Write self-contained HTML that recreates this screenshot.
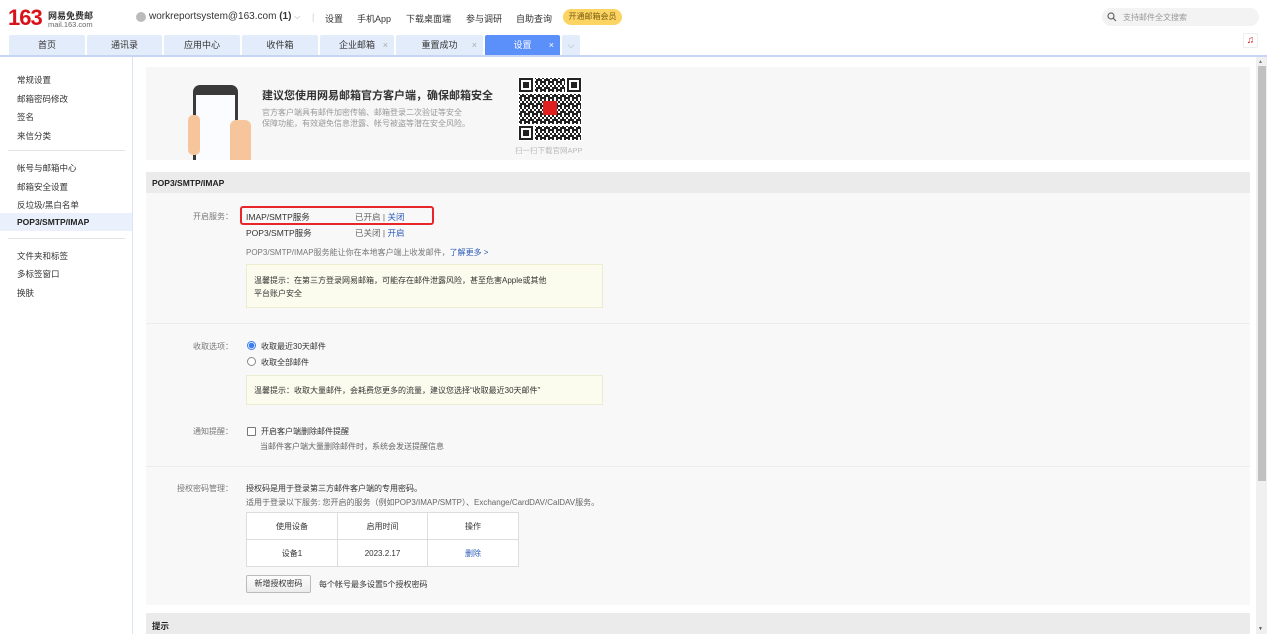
<!DOCTYPE html>
<html><head><meta charset="utf-8">
<style>
*{margin:0;padding:0;box-sizing:border-box}
body{width:1267px;height:634px;overflow:hidden;background:#fff;font-family:"Liberation Sans","Noto Sans CJK SC",sans-serif;font-size:9px;color:#333;position:relative}
.a{position:absolute;white-space:nowrap}
.tab{position:absolute;top:35px;height:20px;background:#e3ecfa;color:#333;font-size:9px;text-align:center;line-height:20px;border-radius:2px 2px 0 0}
.tab .x{position:absolute;right:6px;top:0;color:#aaa;font-size:9px}
.side{position:absolute;left:17px;font-size:8.5px;color:#333}
.lbl{position:absolute;color:#777;font-size:8px}
.blue{color:#2a5bb8}
.tip{position:absolute;left:246px;width:357px;background:#fcfcee;border:1px solid #ececd0;font-size:8px;color:#333}
</style></head><body>
<!-- header -->
<div class="a" style="left:8px;top:5px;font-size:22px;font-weight:bold;color:#d8121a;font-family:'Liberation Sans',sans-serif;letter-spacing:-1px">163</div>
<div class="a" style="left:48px;top:9px;font-size:9px;font-weight:bold;color:#333">网易免费邮</div>
<div class="a" style="left:48px;top:20px;font-size:7.5px;color:#666">mail.163.com</div>
<div class="a" style="left:136px;top:12px;width:10px;height:10px;border-radius:50%;background:#bbb"></div>
<div class="a" style="left:149px;top:11px;font-size:10px;color:#333">workreportsystem@163.com <b>(1)</b> <span style="color:#999;font-size:8px">⌵</span></div>
<div class="a" style="left:312px;top:12px;color:#ccc">|</div>
<div class="a" style="left:325px;top:12px;font-size:9px">设置</div>
<div class="a" style="left:357px;top:12px;font-size:9px">手机App</div>
<div class="a" style="left:406px;top:12px;font-size:9px">下载桌面端</div>
<div class="a" style="left:466px;top:12px;font-size:9px">参与调研</div>
<div class="a" style="left:516px;top:12px;font-size:9px">自助查询</div>
<div class="a" style="left:563px;top:9px;width:59px;height:16px;border-radius:8px;background:#fbd461;font-size:8px;color:#7a5a10;text-align:center;line-height:16px">开通邮箱会员</div>
<div class="a" style="left:1102px;top:8px;width:157px;height:18px;border-radius:9px;background:#f3f3f3"></div>
<svg class="a" style="left:1107px;top:12px" width="10" height="10"><circle cx="4" cy="4" r="3" fill="none" stroke="#666" stroke-width="1.2"/><line x1="6.3" y1="6.3" x2="9" y2="9" stroke="#666" stroke-width="1.2"/></svg>
<div class="a" style="left:1123px;top:12px;font-size:8px;color:#999">支持邮件全文搜索</div>
<div class="a" style="left:1243px;top:33px;width:15px;height:15px;border:1px solid #eee;border-radius:2px;background:#fff;color:#d8121a;font-size:10px;text-align:center;line-height:13px;font-weight:bold">♫</div>
<!-- tabs -->
<div class="tab" style="left:9px;width:76px">首页</div>
<div class="tab" style="left:87px;width:75px">通讯录</div>
<div class="tab" style="left:164px;width:76px">应用中心</div>
<div class="tab" style="left:242px;width:76px">收件箱</div>
<div class="tab" style="left:320px;width:74px">企业邮箱<span class="x">×</span></div>
<div class="tab" style="left:396px;width:87px">重置成功<span class="x">×</span></div>
<div class="tab" style="left:485px;width:75px;background:#5b8ff9;color:#fff">设置<span class="x" style="color:#fff">×</span></div>
<div class="tab" style="left:562px;width:18px;color:#aaa">⌵</div>
<div class="a" style="left:0;top:55px;width:1267px;height:2px;background:#c5d5f3"></div>
<!-- sidebar -->
<div class="a" style="left:132px;top:57px;width:1px;height:577px;background:#dbe4f4"></div>
<div class="side" style="top:74px">常规设置</div>
<div class="side" style="top:93px">邮箱密码修改</div>
<div class="side" style="top:111px">签名</div>
<div class="side" style="top:130px">来信分类</div>
<div class="a" style="left:8px;top:150px;width:117px;height:1px;background:#e3e3e3"></div>
<div class="side" style="top:162px">帐号与邮箱中心</div>
<div class="side" style="top:181px">邮箱安全设置</div>
<div class="side" style="top:199px">反垃圾/黑白名单</div>
<div class="a" style="left:0;top:213px;width:132px;height:18px;background:#eaf1fc"></div>
<div class="side" style="top:217px;font-weight:bold;color:#222">POP3/SMTP/IMAP</div>
<div class="a" style="left:8px;top:238px;width:117px;height:1px;background:#e3e3e3"></div>
<div class="side" style="top:250px">文件夹和标签</div>
<div class="side" style="top:268px">多标签窗口</div>
<div class="side" style="top:287px">换肤</div>
<!-- banner -->
<div class="a" style="left:146px;top:67px;width:1104px;height:93px;background:#f7f7f7"></div>
<div class="a" style="left:193px;top:85px;width:45px;height:75px;background:#3a3a3a;border-radius:7px 7px 0 0"></div>
<div class="a" style="left:196px;top:95px;width:39px;height:65px;background:#fafcff"></div>
<div class="a" style="left:188px;top:115px;width:12px;height:40px;background:#f6c59c;border-radius:5px"></div>
<div class="a" style="left:230px;top:120px;width:21px;height:40px;background:#f6c59c;border-radius:6px 6px 0 0"></div>
<div class="a" style="left:262px;top:87px;font-size:11px;font-weight:bold;color:#333">建议您使用网易邮箱官方客户端，确保邮箱安全</div>
<div class="a" style="left:262px;top:107px;font-size:8px;color:#999;line-height:11px">官方客户端具有邮件加密传输、邮箱登录二次验证等安全<br>保障功能，有效避免信息泄露、帐号被盗等潜在安全风险。</div>
<svg class="a" style="left:518px;top:77px" width="64" height="64">
<defs><pattern id="n" width="8" height="8" patternUnits="userSpaceOnUse">
<rect x="0" y="0" width="2" height="2" fill="#222"/><rect x="4" y="0" width="2" height="4" fill="#222"/><rect x="2" y="2" width="2" height="2" fill="#222"/><rect x="6" y="2" width="2" height="2" fill="#222"/><rect x="0" y="4" width="4" height="2" fill="#222"/><rect x="6" y="4" width="2" height="4" fill="#222"/><rect x="2" y="6" width="2" height="2" fill="#222"/></pattern></defs>
<rect width="64" height="64" fill="#fff"/>
<rect x="17" y="1" width="30" height="14" fill="url(#n)"/><rect x="1" y="17" width="62" height="30" fill="url(#n)"/><rect x="17" y="49" width="46" height="14" fill="url(#n)"/>
<g fill="#222"><rect x="1" y="1" width="14" height="14"/><rect x="49" y="1" width="14" height="14"/><rect x="1" y="49" width="14" height="14"/></g>
<g fill="#fff"><rect x="3" y="3" width="10" height="10"/><rect x="51" y="3" width="10" height="10"/><rect x="3" y="51" width="10" height="10"/></g>
<g fill="#222"><rect x="5" y="5" width="6" height="6"/><rect x="53" y="5" width="6" height="6"/><rect x="5" y="53" width="6" height="6"/></g>
<rect x="25" y="24" width="14" height="14" fill="#e02020"/>
</svg>
<div class="a" style="left:515px;top:145px;font-size:7.5px;color:#bbb">扫一扫下载官网APP</div>
<!-- section -->
<div class="a" style="left:146px;top:172px;width:1104px;height:21px;background:#ebebeb"></div>
<div class="a" style="left:152px;top:178px;font-size:8.5px;font-weight:bold;color:#222">POP3/SMTP/IMAP</div>
<div class="a" style="left:146px;top:193px;width:1104px;height:412px;background:#f8f8f8"></div>
<div class="a" style="left:146px;top:323px;width:1104px;height:1px;background:#ececec"></div>
<div class="a" style="left:146px;top:466px;width:1104px;height:1px;background:#ececec"></div>
<div class="lbl" style="left:193px;top:211px">开启服务：</div>
<div class="a" style="left:240px;top:206px;width:194px;height:19px;border:2px solid #e8262a;border-radius:3px"></div>
<div class="a" style="left:246px;top:211px;font-size:8.5px">IMAP/SMTP服务</div>
<div class="a" style="left:355px;top:211px;font-size:8.5px;color:#666">已开启 | <span class="blue">关闭</span></div>
<div class="a" style="left:246px;top:227px;font-size:8.5px">POP3/SMTP服务</div>
<div class="a" style="left:355px;top:227px;font-size:8.5px;color:#666">已关闭 | <span class="blue">开启</span></div>
<div class="a" style="left:246px;top:247px;font-size:8px;color:#777">POP3/SMTP/IMAP服务能让你在本地客户端上收发邮件，<span class="blue">了解更多 &gt;</span></div>
<div class="tip" style="top:264px;height:44px;padding:9px 7px;line-height:13px">温馨提示：在第三方登录网易邮箱，可能存在邮件泄露风险，甚至危害Apple或其他<br>平台账户安全</div>
<div class="lbl" style="left:193px;top:341px">收取选项：</div>
<div class="a" style="left:247px;top:341px;width:9px;height:9px;border-radius:50%;border:1px solid #3b7cf0;background:radial-gradient(#3b7cf0 2.5px,#fff 3px)"></div>
<div class="a" style="left:261px;top:341px;font-size:8px">收取最近30天邮件</div>
<div class="a" style="left:247px;top:357px;width:9px;height:9px;border-radius:50%;border:1px solid #888;background:#fff"></div>
<div class="a" style="left:261px;top:357px;font-size:8px">收取全部邮件</div>
<div class="tip" style="top:375px;height:30px;padding:9px 7px">温馨提示：收取大量邮件，会耗费您更多的流量，建议您选择“收取最近30天邮件”</div>
<div class="lbl" style="left:193px;top:426px">通知提醒：</div>
<div class="a" style="left:247px;top:427px;width:9px;height:9px;border:1px solid #777;background:#fff;border-radius:1px"></div>
<div class="a" style="left:261px;top:426px;font-size:8px">开启客户端删除邮件提醒</div>
<div class="a" style="left:260px;top:441px;font-size:8px;color:#666">当邮件客户端大量删除邮件时，系统会发送提醒信息</div>
<div class="lbl" style="left:177px;top:483px">授权密码管理：</div>
<div class="a" style="left:246px;top:483px;font-size:8px">授权码是用于登录第三方邮件客户端的专用密码。</div>
<div class="a" style="left:246px;top:497px;font-size:8px;color:#666">适用于登录以下服务: 您开启的服务（例如POP3/IMAP/SMTP）、Exchange/CardDAV/CalDAV服务。</div>
<table class="a" style="left:246px;top:512px;border-collapse:collapse;font-size:8px;background:#fff">
<tr style="height:27px"><td style="width:91px;border:1px solid #ddd;text-align:center">使用设备</td><td style="width:90px;border:1px solid #ddd;text-align:center">启用时间</td><td style="width:91px;border:1px solid #ddd;text-align:center">操作</td></tr>
<tr style="height:27px"><td style="border:1px solid #ddd;text-align:center">设备1</td><td style="border:1px solid #ddd;text-align:center">2023.2.17</td><td style="border:1px solid #ddd;text-align:center" class="blue">删除</td></tr>
</table>
<div class="a" style="left:246px;top:575px;width:65px;height:18px;border:1px solid #bbb;border-radius:2px;background:linear-gradient(#fdfdfd,#ececec);font-size:8px;text-align:center;line-height:16px">新增授权密码</div>
<div class="a" style="left:319px;top:579px;font-size:8px">每个帐号最多设置5个授权密码</div>
<div class="a" style="left:146px;top:613px;width:1104px;height:21px;background:#ebebeb"></div>
<div class="a" style="left:152px;top:620px;font-size:8.5px;font-weight:bold;color:#222">提示</div>
<!-- scrollbar -->
<div class="a" style="left:1256px;top:57px;width:11px;height:577px;background:#f0f0f0"></div>
<div class="a" style="left:1258px;top:66px;width:8px;height:415px;background:#c1c1c1"></div>
<div class="a" style="left:1258px;top:59px;font-size:5px;color:#777">▲</div>
<div class="a" style="left:1258px;top:626px;font-size:5px;color:#555">▼</div>
</body></html>
